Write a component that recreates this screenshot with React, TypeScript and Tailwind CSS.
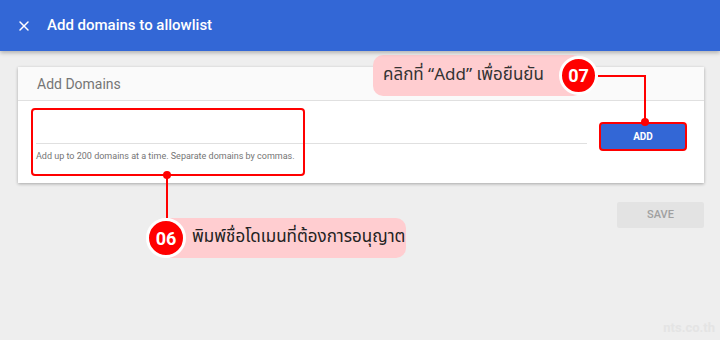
import { X } from "lucide-react"

export default function App() {
    return (
        <div className="relative h-[340px] w-[720px] overflow-hidden bg-[#eeeeee] font-['Roboto',sans-serif]">
            {/* app bar */}
            <div className="relative z-10 flex h-[51px] items-center bg-[#3367d6] pl-[16px] shadow-[0_2px_4px_rgba(0,0,0,0.25)]">
                <X className="h-[16px] w-[16px] text-white" strokeWidth={2.2} />
                <span className="ml-[15px] text-[15px] font-medium text-white">Add domains to allowlist</span>
            </div>

            {/* card */}
            <div className="ml-[18px] mr-[16px] mt-[16px] bg-white shadow-[0_1px_3px_rgba(0,0,0,0.3)]">
                <div className="flex h-[34px] items-center border-b border-[#e0e0e0] bg-[#fafafa] pl-[19px] pt-[2px] text-[14px] text-[#757575]">
                    Add Domains
                </div>
                <div className="relative flex h-[82px] items-start pl-[18px] pr-[17px]">
                    <div className="flex-1">
                        <div className="h-[43px] border-b border-[#e0e0e0]" />
                        <div className="mt-[6px] text-[9px] text-[#757575]">
                            Add up to 200 domains at a time. Separate domains by commas.
                        </div>
                    </div>
                    <button className="ml-[12px] mt-[21px] h-[29px] w-[88px] rounded-[4px] border-2 border-[#ff0000] bg-[#3367d6] text-[10px] font-bold text-white">
                        ADD
                    </button>
                    {/* highlight around the input */}
                    <div className="absolute left-[13px] top-[7px] h-[68px] w-[274px] rounded-[4px] border-2 border-[#ff0000]" />
                </div>
            </div>

            <div className="mr-[16px] mt-[19px] flex justify-end">
                <button className="h-[26px] w-[87px] rounded-[2px] bg-[#e3e3e3] text-[11px] font-medium text-[#a0a0a0]">SAVE</button>
            </div>

            {/* callout 07 */}
            <div className="absolute left-[373px] top-[55px] flex items-start">
                <div className="flex h-[41px] w-[210px] items-center rounded-[10px] bg-[#ffcdd0] pl-[10px] font-['Noto_Sans_Thai','Noto_Sans',sans-serif] text-[17px] text-[#333333]">
                    คลิกที่ “Add” เพื่อยืนยัน
                </div>
                <div className="relative -ml-[24px] mt-[1px] flex h-[39px] w-[39px] items-center justify-center rounded-full border-[3px] border-white bg-[#ff0000] text-[18px] font-bold text-white">
                    07
                </div>
                <div className="relative mt-[20px] h-[47px] w-[48px] border-r-2 border-t-2 border-[#ff0000]">
                    <div className="absolute -bottom-[4px] -right-[5px] h-[8px] w-[8px] rounded-full bg-[#ff0000]" />
                </div>
            </div>

            {/* callout 06 */}
            <div className="absolute left-[146px] top-[171px] flex items-end">
                <div className="relative z-10 flex w-[40px] flex-col items-center">
                    <div className="ml-[2px] h-[8px] w-[8px] rounded-full bg-[#ff0000]" />
                    <div className="-mt-[4px] ml-[2px] h-[43px] w-[2px] bg-[#ff0000]" />
                    <div className="flex h-[40px] w-[40px] items-center justify-center rounded-full border-[3px] border-white bg-[#ff0000] text-[18px] font-bold text-white">
                        06
                    </div>
                </div>
                <div className="-ml-[16px] flex h-[40px] w-[236px] items-center rounded-r-[10px] bg-[#ffcdd0] pl-[22px] font-['Noto_Sans_Thai','Noto_Sans',sans-serif] text-[17px] text-[#222222]">
                    พิมพ์ชื่อโดเมนที่ต้องการอนุญาต
                </div>
            </div>

            <div className="absolute right-[5px] bottom-[3px] text-[13px] font-bold text-[#e4e4e4]">nts.co.th</div>
        </div>
    )
}
